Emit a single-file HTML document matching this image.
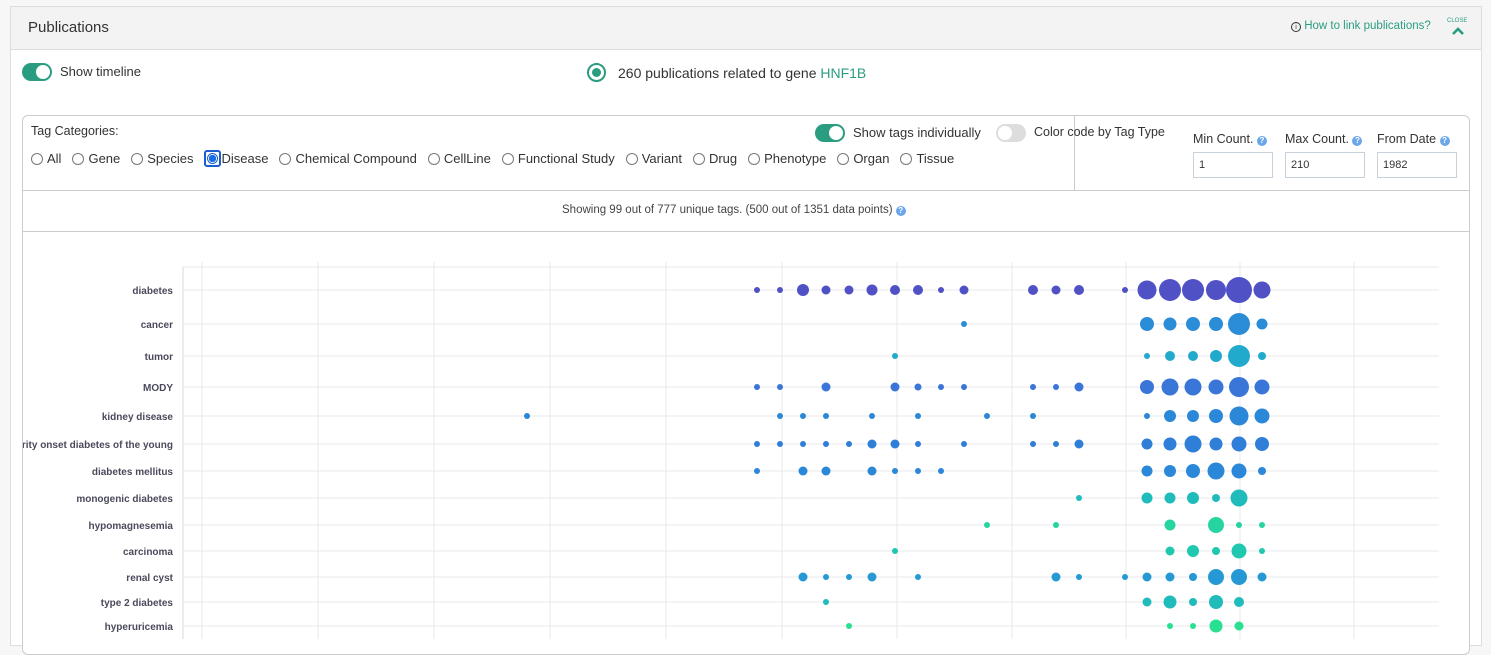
<!DOCTYPE html>
<html><head><meta charset="utf-8"><style>
*{box-sizing:border-box;margin:0;padding:0}
body{width:1491px;height:639px;overflow:hidden;background:#f7f7f7;font-family:"Liberation Sans",sans-serif;color:#333;position:relative}
.a{position:absolute}
.panel{left:10px;top:6px;width:1472px;height:640px;background:#fff;border:1px solid #ddd}
.hdr{left:11px;top:7px;width:1470px;height:43px;background:#f3f3f3;border-bottom:1px solid #ddd}
.tog{width:30px;height:18px;border-radius:9px;background:#2a9d80}
.tog::after{content:"";position:absolute;right:2px;top:2px;width:14px;height:14px;border-radius:50%;background:#fff}
.tog.off{background:#ddd}
.tog.off::after{left:2px;right:auto}
.t13{font-size:13px;color:#333}
.rad{display:inline-block;width:12px;height:12px;border:1px solid #777;border-radius:50%;vertical-align:-2px;margin-right:4px}
.cats span{margin-right:11px;font-size:13px}
.inp{width:80px;height:26px;border:1px solid #c8d0da;font-size:11px;padding:6px 5px;color:#333}
.q{display:inline-block;width:10px;height:10px;border-radius:50%;background:#6aa6e8;color:#fff;font-size:8px;text-align:center;line-height:10px;font-weight:bold;vertical-align:0px}
</style></head><body>
<div class="a panel"></div>
<div class="a hdr"></div>
<div class="a" style="left:28px;top:19px;font-size:15px;color:#333">Publications</div>
<div class="a" style="left:1291px;top:20px;font-size:11.5px;color:#2a9d80"><span style="display:inline-block;width:10px;height:10px;border:1px solid #333;border-radius:50%;font-size:7px;color:#333;text-align:center;line-height:9px;vertical-align:0">i</span> How to link publications?</div>
<div class="a" style="left:1447px;top:18px;font-size:6px;color:#2a9d80">CLOSE</div>
<svg class="a" style="left:1451px;top:27px" width="14" height="9"><path d="M2 7 L7 2 L12 7" stroke="#2a9d80" stroke-width="2.6" fill="none"/></svg>

<div class="a tog" style="left:22px;top:63px"></div>
<div class="a t13" style="left:60px;top:64px">Show timeline</div>
<div class="a" style="left:587px;top:63px;width:19px;height:19px;border:2px solid #2a9d80;border-radius:50%"><div style="margin:3px;width:9px;height:9px;border-radius:50%;background:#2a9d80"></div></div>
<div class="a" style="left:618px;top:65px;font-size:14px;color:#333">260 publications related to gene <span style="color:#2a9d80">HNF1B</span></div>

<div class="a" style="left:22px;top:115px;width:1448px;height:540px;border:1px solid #ccc;border-radius:6px;background:#fff"></div>
<div class="a" style="left:23px;top:190px;width:1446px;border-top:1px solid #ccc"></div>
<div class="a" style="left:23px;top:231px;width:1446px;border-top:1px solid #ccc"></div>
<div class="a" style="left:1074px;top:116px;height:74px;border-left:1px solid #ccc"></div>
<div class="a t13" style="left:31px;top:124px;font-size:12.5px">Tag Categories:</div>
<div class="a cats" style="left:31px;top:150px;white-space:nowrap"><span><i class="rad"></i>All</span><span><i class="rad"></i>Gene</span><span><i class="rad"></i>Species</span><span style="margin-left:-1px"><i class="rad" style="border:2px solid #1a5fd0;width:17px;height:17px;border-radius:3px;vertical-align:-4px;margin-right:1px;position:relative"><i style="position:absolute;left:1px;top:1px;width:11px;height:11px;border:1px solid #1a5fd0;border-radius:50%;background:radial-gradient(#1a6fe0 55%,#fff 60%)"></i></i>Disease</span><span><i class="rad"></i>Chemical Compound</span><span><i class="rad"></i>CellLine</span><span><i class="rad"></i>Functional Study</span><span><i class="rad"></i>Variant</span><span><i class="rad"></i>Drug</span><span><i class="rad"></i>Phenotype</span><span><i class="rad"></i>Organ</span><span><i class="rad"></i>Tissue</span></div>
<div class="a tog" style="left:815px;top:124px"></div>
<div class="a t13" style="left:853px;top:125px">Show tags individually</div>
<div class="a tog off" style="left:996px;top:124px"></div>
<div class="a t13" style="left:1034px;top:125px;font-size:12.5px">Color code by Tag Type</div>
<div class="a t13" style="left:1193px;top:132px;font-size:12.5px">Min Count. <span class="q">?</span></div>
<div class="a t13" style="left:1285px;top:132px;font-size:12.5px">Max Count. <span class="q">?</span></div>
<div class="a t13" style="left:1377px;top:132px;font-size:12.5px">From Date <span class="q">?</span></div>
<div class="a inp" style="left:1193px;top:152px">1</div>
<div class="a inp" style="left:1285px;top:152px">210</div>
<div class="a inp" style="left:1377px;top:152px">1982</div>
<div class="a" style="left:562px;top:204px;font-size:11.5px;color:#444">Showing 99 out of 777 unique tags. (500 out of 1351 data points) <span class="q">?</span></div>

<svg class="a" style="left:0;top:0" width="1491" height="639">
<defs><clipPath id="c"><rect x="23" y="232" width="1446" height="420"/></clipPath></defs>
<g stroke="#e8e8ee" stroke-width="1">
<line x1="202" y1="262" x2="202" y2="639"/><line x1="318" y1="262" x2="318" y2="639"/><line x1="434" y1="262" x2="434" y2="639"/><line x1="550" y1="262" x2="550" y2="639"/><line x1="666" y1="262" x2="666" y2="639"/><line x1="782" y1="262" x2="782" y2="639"/><line x1="897" y1="262" x2="897" y2="639"/><line x1="1012" y1="262" x2="1012" y2="639"/><line x1="1126" y1="262" x2="1126" y2="639"/><line x1="1240" y1="262" x2="1240" y2="639"/><line x1="1354" y1="262" x2="1354" y2="639"/>
<line x1="183" y1="267" x2="1439" y2="267"/>
<line x1="183" y1="290" x2="1439" y2="290"/><line x1="183" y1="324" x2="1439" y2="324"/><line x1="183" y1="356" x2="1439" y2="356"/><line x1="183" y1="387" x2="1439" y2="387"/><line x1="183" y1="416" x2="1439" y2="416"/><line x1="183" y1="444" x2="1439" y2="444"/><line x1="183" y1="471" x2="1439" y2="471"/><line x1="183" y1="498" x2="1439" y2="498"/><line x1="183" y1="525" x2="1439" y2="525"/><line x1="183" y1="551" x2="1439" y2="551"/><line x1="183" y1="577" x2="1439" y2="577"/><line x1="183" y1="602" x2="1439" y2="602"/><line x1="183" y1="626" x2="1439" y2="626"/>
</g>
<line x1="183" y1="267" x2="183" y2="639" stroke="#d8d8e0"/>
<g clip-path="url(#c)" font-family="Liberation Sans,sans-serif" font-size="10" font-weight="bold" fill="#4a4a5c" text-anchor="end">
<text x="173" y="294">diabetes</text><text x="173" y="328">cancer</text><text x="173" y="360">tumor</text><text x="173" y="391">MODY</text><text x="173" y="420">kidney disease</text><text x="173" y="448">maturity onset diabetes of the young</text><text x="173" y="475">diabetes mellitus</text><text x="173" y="502">monogenic diabetes</text><text x="173" y="529">hypomagnesemia</text><text x="173" y="555">carcinoma</text><text x="173" y="581">renal cyst</text><text x="173" y="606">type 2 diabetes</text><text x="173" y="630">hyperuricemia</text>
</g>
<g fill="#5151c6"><circle cx="757" cy="290" r="3"/><circle cx="780" cy="290" r="3"/><circle cx="803" cy="290" r="6"/><circle cx="826" cy="290" r="4.5"/><circle cx="849" cy="290" r="4.5"/><circle cx="872" cy="290" r="5.5"/><circle cx="895" cy="290" r="5"/><circle cx="918" cy="290" r="5"/><circle cx="941" cy="290" r="3"/><circle cx="964" cy="290" r="4.5"/><circle cx="1033" cy="290" r="5"/><circle cx="1056" cy="290" r="4.5"/><circle cx="1079" cy="290" r="5"/><circle cx="1125" cy="290" r="3"/><circle cx="1147" cy="290" r="9.5"/><circle cx="1170" cy="290" r="11"/><circle cx="1193" cy="290" r="11"/><circle cx="1216" cy="290" r="10"/><circle cx="1239" cy="290" r="13"/><circle cx="1262" cy="290" r="8.5"/></g>
<g fill="#2b8cd8"><circle cx="964" cy="324" r="3"/><circle cx="1147" cy="324" r="7"/><circle cx="1170" cy="324" r="6.5"/><circle cx="1193" cy="324" r="7"/><circle cx="1216" cy="324" r="7"/><circle cx="1239" cy="324" r="11"/><circle cx="1262" cy="324" r="5.5"/></g>
<g fill="#22aacc"><circle cx="895" cy="356" r="3"/><circle cx="1147" cy="356" r="3"/><circle cx="1170" cy="356" r="5"/><circle cx="1193" cy="356" r="5"/><circle cx="1216" cy="356" r="6"/><circle cx="1239" cy="356" r="11"/><circle cx="1262" cy="356" r="4"/></g>
<g fill="#3a75d8"><circle cx="757" cy="387" r="3"/><circle cx="780" cy="387" r="3"/><circle cx="826" cy="387" r="4.5"/><circle cx="895" cy="387" r="4.5"/><circle cx="918" cy="387" r="3.5"/><circle cx="941" cy="387" r="3"/><circle cx="964" cy="387" r="3"/><circle cx="1033" cy="387" r="3"/><circle cx="1056" cy="387" r="3"/><circle cx="1079" cy="387" r="4.5"/><circle cx="1147" cy="387" r="7"/><circle cx="1170" cy="387" r="8.5"/><circle cx="1193" cy="387" r="8.5"/><circle cx="1216" cy="387" r="7.5"/><circle cx="1239" cy="387" r="10"/><circle cx="1262" cy="387" r="7.5"/></g>
<g fill="#2b88d8"><circle cx="527" cy="416" r="3"/><circle cx="780" cy="416" r="3"/><circle cx="803" cy="416" r="3"/><circle cx="826" cy="416" r="3"/><circle cx="872" cy="416" r="3"/><circle cx="918" cy="416" r="3"/><circle cx="987" cy="416" r="3"/><circle cx="1033" cy="416" r="3"/><circle cx="1147" cy="416" r="3"/><circle cx="1170" cy="416" r="6"/><circle cx="1193" cy="416" r="6"/><circle cx="1216" cy="416" r="7"/><circle cx="1239" cy="416" r="9.5"/><circle cx="1262" cy="416" r="7.5"/></g>
<g fill="#2f7fd8"><circle cx="757" cy="444" r="3"/><circle cx="780" cy="444" r="3"/><circle cx="803" cy="444" r="3"/><circle cx="826" cy="444" r="3"/><circle cx="849" cy="444" r="3"/><circle cx="872" cy="444" r="4.5"/><circle cx="895" cy="444" r="4.5"/><circle cx="918" cy="444" r="3"/><circle cx="964" cy="444" r="3"/><circle cx="1033" cy="444" r="3"/><circle cx="1056" cy="444" r="3"/><circle cx="1079" cy="444" r="4.5"/><circle cx="1147" cy="444" r="5.5"/><circle cx="1170" cy="444" r="6.5"/><circle cx="1193" cy="444" r="8.5"/><circle cx="1216" cy="444" r="6.5"/><circle cx="1239" cy="444" r="7.5"/><circle cx="1262" cy="444" r="7"/></g>
<g fill="#2b88d8"><circle cx="757" cy="471" r="3"/><circle cx="803" cy="471" r="4.5"/><circle cx="826" cy="471" r="4.5"/><circle cx="872" cy="471" r="4.5"/><circle cx="895" cy="471" r="3"/><circle cx="918" cy="471" r="3"/><circle cx="941" cy="471" r="3"/><circle cx="1147" cy="471" r="5.5"/><circle cx="1170" cy="471" r="6"/><circle cx="1193" cy="471" r="7"/><circle cx="1216" cy="471" r="8.5"/><circle cx="1239" cy="471" r="7.5"/><circle cx="1262" cy="471" r="4"/></g>
<g fill="#20bcbc"><circle cx="1079" cy="498" r="3"/><circle cx="1147" cy="498" r="5.5"/><circle cx="1170" cy="498" r="5.5"/><circle cx="1193" cy="498" r="6"/><circle cx="1216" cy="498" r="4"/><circle cx="1239" cy="498" r="8.5"/></g>
<g fill="#25d4a0"><circle cx="987" cy="525" r="3"/><circle cx="1056" cy="525" r="3"/><circle cx="1170" cy="525" r="5.5"/><circle cx="1216" cy="525" r="8"/><circle cx="1239" cy="525" r="3"/><circle cx="1262" cy="525" r="3"/></g>
<g fill="#20c8b0"><circle cx="895" cy="551" r="3"/><circle cx="1170" cy="551" r="4.5"/><circle cx="1193" cy="551" r="6"/><circle cx="1216" cy="551" r="4"/><circle cx="1239" cy="551" r="7.5"/><circle cx="1262" cy="551" r="3"/></g>
<g fill="#2699d4"><circle cx="803" cy="577" r="4.5"/><circle cx="826" cy="577" r="3"/><circle cx="849" cy="577" r="3"/><circle cx="872" cy="577" r="4.5"/><circle cx="918" cy="577" r="3"/><circle cx="1056" cy="577" r="4.5"/><circle cx="1079" cy="577" r="3"/><circle cx="1125" cy="577" r="3"/><circle cx="1147" cy="577" r="4.5"/><circle cx="1170" cy="577" r="4.5"/><circle cx="1193" cy="577" r="4"/><circle cx="1216" cy="577" r="8"/><circle cx="1239" cy="577" r="8"/><circle cx="1262" cy="577" r="4.5"/></g>
<g fill="#20bcbc"><circle cx="826" cy="602" r="3"/><circle cx="1147" cy="602" r="4.5"/><circle cx="1170" cy="602" r="6.5"/><circle cx="1193" cy="602" r="4"/><circle cx="1216" cy="602" r="7"/><circle cx="1239" cy="602" r="5"/></g>
<g fill="#28e090"><circle cx="849" cy="626" r="3"/><circle cx="1170" cy="626" r="3"/><circle cx="1193" cy="626" r="3"/><circle cx="1216" cy="626" r="6.5"/><circle cx="1239" cy="626" r="4.5"/></g>
</svg>
</body></html>
